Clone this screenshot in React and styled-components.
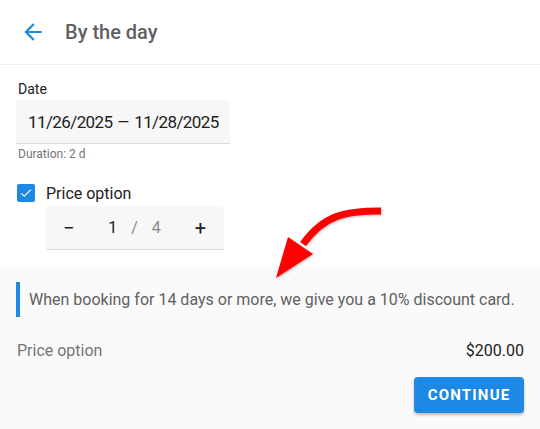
import React from "react";
import styled, { createGlobalStyle } from "styled-components";

const GlobalStyle = createGlobalStyle`
  html, body {
    margin: 0;
    padding: 0;
    background: #fff;
    font-family: Roboto, "Liberation Sans", Arial, sans-serif;
  }
`;

const Page = styled.div`
  position: relative;
  width: 540px;
  height: 429px;
  display: flex;
  flex-direction: column;
  overflow: hidden;
`;

const Header = styled.header`
  height: 64px;
  flex-shrink: 0;
  display: flex;
  align-items: center;
  padding-left: 20px;
  border-bottom: 1px solid #eeeeee;
`;

const BackButton = styled.button`
  border: 0;
  background: none;
  padding: 0;
  width: 26px;
  height: 26px;
  display: flex;
  color: #1e88e5;
  margin-right: 19px;
`;

const Title = styled.h1`
  margin: 0;
  font-size: 20px;
  font-weight: 500;
  color: #616161;
`;

const Content = styled.div`
  flex-shrink: 0;
  padding: 14px 16px 15px;
  display: flex;
  flex-direction: column;
`;

const Label = styled.label`
  font-size: 14px;
  line-height: 20px;
  color: #212121;
  padding-left: 2px;
  margin-bottom: 1px;
`;

const Field = styled.div`
  height: 43px;
  box-sizing: content-box;
  background: #f7f7f7;
  border-bottom: 1px solid #dcdcdc;
  border-radius: 4px 4px 0 0;
  display: flex;
  align-items: center;
  white-space: nowrap;
  justify-content: ${(p) => (p.$center ? "space-between" : "flex-start")};
  padding: ${(p) => (p.$center ? "0 18px 0 17px" : "0 0 0 12px")};
  font-size: 17px;
  color: #212121;
  width: ${(p) => p.$width};
`;

const DateText = styled.span`
  letter-spacing: -0.6px;
`;

const Dash = styled.span`
  font-size: 15px;
  margin: 0 5px;
`;

const Helper = styled.div`
  font-size: 12px;
  line-height: 16px;
  color: #757575;
  margin-top: 2px;
  padding-left: 2px;
`;

const CheckRow = styled.div`
  display: flex;
  align-items: center;
  margin-top: 21px;
  height: 20px;
`;

const Check = styled.span`
  width: 18px;
  height: 18px;
  border-radius: 2px;
  background: #1e88e5;
  display: flex;
  align-items: center;
  justify-content: center;
  margin-left: 1px;
  margin-right: 11px;
`;

const CheckLabel = styled.span`
  font-size: 16px;
  color: #212121;
`;

const CounterWrap = styled.div`
  margin-top: 3px;
  padding-left: 30px;
`;

const CounterValue = styled.div`
  display: flex;
  align-items: center;
  gap: 14px;
  font-size: 16px;
`;

const Num = styled.span`
  color: ${(p) => (p.$muted ? "#8a8a8a" : "#212121")};
`;

const Sign = styled.span`
  font-size: 20px;
  color: #212121;
`;

const Footer = styled.div`
  flex: 1;
  background: #fafafa;
  padding: 17px 16px 0;
  display: flex;
  flex-direction: column;
`;

const Note = styled.blockquote`
  margin: 0;
  border-left: 4px solid #1e88e5;
  padding: 8px 0 8px 9px;
  font-size: 16px;
  line-height: 19px;
  color: #616161;
`;

const PriceRow = styled.div`
  display: flex;
  justify-content: space-between;
  align-items: center;
  margin-top: 24px;
  font-size: 16px;
  padding-left: 1px;
`;

const PriceLabel = styled.span`
  color: #757575;
`;

const PriceValue = styled.span`
  color: #212121;
`;

const Actions = styled.div`
  display: flex;
  justify-content: flex-end;
  margin-top: 17px;
`;

const Continue = styled.button`
  height: 36px;
  width: 110px;
  border: 0;
  border-radius: 4px;
  background: #1e88e5;
  color: #fff;
  font-family: inherit;
  font-size: 15px;
  font-weight: 700;
  letter-spacing: 1.2px;
  text-transform: uppercase;
  box-shadow: 0 2px 3px rgba(0, 0, 0, 0.25);
`;

const Pointer = styled.svg`
  position: absolute;
  left: 260px;
  top: 195px;
  filter: drop-shadow(1px 1px 1px rgba(0, 0, 0, 0.25));
`;

export default function App() {
  return (
    <Page>
      <GlobalStyle />
      <Header>
        <BackButton aria-label="Back">
          <svg width="26" height="26" viewBox="0 0 24 24">
            <path fill="currentColor" d="M20 11H7.83l5.59-5.59L12 4l-8 8 8 8 1.41-1.41L7.83 13H20v-2z" />
          </svg>
        </BackButton>
        <Title>By the day</Title>
      </Header>
      <Content>
        <Label>Date</Label>
        <Field $width="202px">
          <DateText>11/26/2025</DateText>
          <Dash>—</Dash>
          <DateText>11/28/2025</DateText>
        </Field>
        <Helper>Duration: 2 d</Helper>
        <CheckRow>
          <Check>
            <svg width="14" height="14" viewBox="0 0 24 24">
              <path fill="#fff" d="M9 16.17 4.83 12l-1.42 1.41L9 19 21 7l-1.41-1.41z" />
            </svg>
          </Check>
          <CheckLabel>Price option</CheckLabel>
        </CheckRow>
        <CounterWrap>
          <Field $center $width="143px">
            <Sign>−</Sign>
            <CounterValue>
              <Num>1</Num>
              <Num $muted>/</Num>
              <Num $muted>4</Num>
            </CounterValue>
            <Sign>+</Sign>
          </Field>
        </CounterWrap>
      </Content>
      <Footer>
        <Note>When booking for 14 days or more, we give you a 10% discount card.</Note>
        <PriceRow>
          <PriceLabel>Price option</PriceLabel>
          <PriceValue>$200.00</PriceValue>
        </PriceRow>
        <Actions>
          <Continue>Continue</Continue>
        </Actions>
      </Footer>
      <Pointer width="130" height="90" viewBox="0 0 130 90">
        <path d="M121 16 C 85 16, 64 20, 43 49" fill="none" stroke="#ff0000" strokeWidth="7" />
        <polygon points="28,42 53,59 16,83" fill="#ff0000" />
      </Pointer>
    </Page>
  );
}
